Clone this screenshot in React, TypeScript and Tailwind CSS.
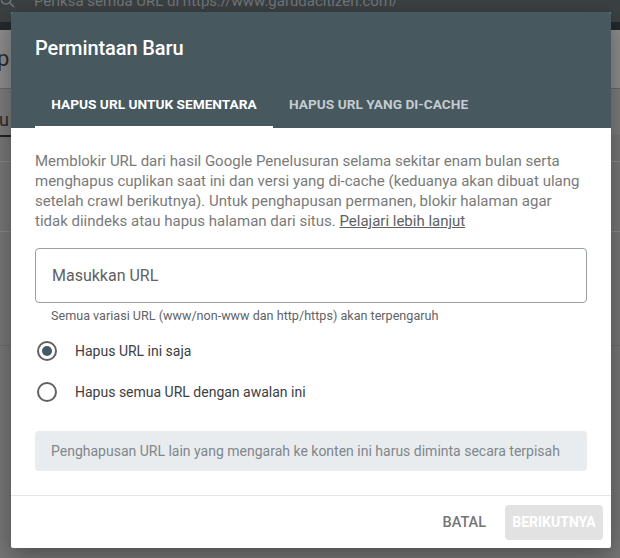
import React from "react";

export default function App() {
  return (
    <div
      className="relative w-[620px] h-[558px] overflow-hidden bg-[#767676]"
      style={{ fontFamily: "Roboto, 'Noto Sans', Arial, sans-serif" }}
    >
      {/* background page (dimmed) */}
      <div className="flex flex-col w-full h-full">
        <div className="h-[22px] bg-[#3b4043] flex items-start overflow-hidden">
          <svg width="14" height="14" viewBox="0 0 14 14" className="ml-[1px] -mt-[6px] mr-[19px]">
            <circle cx="5" cy="5" r="5" fill="none" stroke="#6e7478" strokeWidth="1.6" />
            <path d="M8.5 8.5 L13 13" stroke="#6e7478" strokeWidth="1.6" />
          </svg>
          <span className="text-[15px] leading-[18px] text-[#70767a] -mt-[8px] whitespace-nowrap">
            Periksa semua URL di https://www.garudacitizen.com/
          </span>
        </div>
        <div className="h-[8px] bg-[#23292c]" />
        <div className="h-[59px] bg-[#8d8d8d] border-b border-[#6a6a6a] flex items-center">
          <span className="text-[22px] leading-[26px] text-[#2a2a2a] -ml-[3px]">p</span>
        </div>
        <div className="h-[46px] bg-[#7c7c7c] flex items-end">
          <span className="text-[18px] leading-[22px] text-[#2a2a2a] -ml-[1px] pb-[4px]">u</span>
        </div>
        <div className="h-[2px] w-[30px] bg-[#222]" />
        <div className="h-[25px] border-b border-[#888]" />
        <div className="h-[70px] border-b border-[#888]" />
        <div className="h-[114px] border-b border-[#6c6c6c]" />
      </div>

      {/* dialog */}
      <div className="absolute left-[11px] top-[12px] w-[600px] h-[536px] bg-white rounded-[2px] shadow-[0_8px_24px_rgba(0,0,0,0.35)] flex flex-col overflow-hidden">
        <div className="bg-[#47585f] h-[116px] flex flex-col">
          <div className="h-[68px] pl-[24px] pt-[23px]">
            <div className="text-[20px] leading-[26px] font-medium text-white tracking-[-0.1px]">
              Permintaan Baru
            </div>
          </div>
          <div className="flex h-[48px] pl-[24px]">
            <div className="relative flex items-center justify-center w-[238px] text-[13.7px] font-bold text-white uppercase">
              Hapus URL untuk sementara
              <div className="absolute left-0 right-0 bottom-0 h-[2px] bg-white" />
            </div>
            <div className="flex items-center px-[16px] text-[13.7px] font-bold text-[#c3ccd0] uppercase">
              Hapus URL yang di-cache
            </div>
          </div>
        </div>

        <div className="h-[367px] px-[24px] pt-[23px] flex flex-col">
          <p className="text-[15px] leading-[20px] text-[#7a7a7a]">
            Memblokir URL dari hasil Google Penelusuran selama sekitar enam bulan serta menghapus cuplikan saat ini dan versi yang di-cache (keduanya akan dibuat ulang setelah crawl berikutnya). Untuk penghapusan permanen, blokir halaman agar tidak diindeks atau hapus halaman dari situs.{" "}
            <span className="underline text-[#616161]">Pelajari lebih lanjut</span>
          </p>
          <div className="mt-[17px] h-[55px] border border-[#9aa0a6] rounded-[4px] flex items-center pl-[16px]">
            <span className="text-[16px] text-[#616161]">Masukkan URL</span>
          </div>
          <div className="pl-[16px] pt-[5px] text-[12.6px] leading-[16px] text-[#5f6368]">
            Semua variasi URL (www/non-www dan http/https) akan terpengaruh
          </div>
          <div className="mt-[16px] flex items-center h-[22px]">
            <div className="w-[20px] h-[20px] rounded-full border-2 border-[#5f6368] flex items-center justify-center ml-[2px]">
              <div className="w-[10px] h-[10px] rounded-full bg-[#455a64]" />
            </div>
            <span className="ml-[18px] text-[14px] text-[#3c4043]">Hapus URL ini saja</span>
          </div>
          <div className="mt-[19px] flex items-center h-[22px]">
            <div className="w-[20px] h-[20px] rounded-full border-2 border-[#5f6368] ml-[2px]" />
            <span className="ml-[18px] text-[14px] text-[#3c4043]">Hapus semua URL dengan awalan ini</span>
          </div>
          <div className="mt-[28px] h-[40px] bg-[#e8ecef] rounded-[4px] flex items-center pl-[16px]">
            <span className="text-[14px] text-[#80868b]">
              Penghapusan URL lain yang mengarah ke konten ini harus diminta secara terpisah
            </span>
          </div>
        </div>

        <div className="border-t border-[#e6e6e6] flex-1 flex items-start justify-end pr-[8px] pt-[9px]">
          <div className="h-[35px] flex items-center px-[8px] text-[14.5px] font-medium text-[#757575] uppercase mr-[11px]">
            Batal
          </div>
          <div className="h-[35px] w-[98px] rounded-[4px] bg-[#e2e2e2] flex items-center justify-center text-[14px] font-bold text-white uppercase">
            Berikutnya
          </div>
        </div>
      </div>
    </div>
  );
}
